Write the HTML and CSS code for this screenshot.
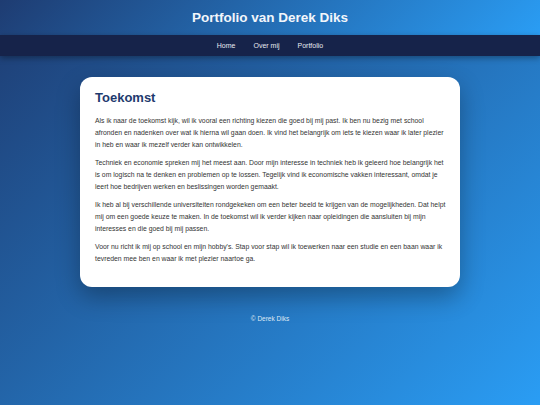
FILE: index.html
```html
<!DOCTYPE html>
<html lang="nl">
<head>
<meta charset="utf-8">
<title>Portfolio van Derek Diks</title>
<link rel="stylesheet" href="styles.css">
</head>
<body>
<header class="site-header">
  <h1 class="site-title">Portfolio van Derek Diks</h1>
</header>
<nav class="site-nav">
  <a href="#" class="nav-link">Home</a>
  <a href="#" class="nav-link">Over mij</a>
  <a href="#" class="nav-link">Portfolio</a>
</nav>
<main class="content">
  <section class="card">
    <h2 class="card-title">Toekomst</h2>
    <p>Als ik naar de toekomst kijk, wil ik vooral een richting kiezen die goed bij mij past. Ik ben nu bezig met school afronden en nadenken over wat ik hierna wil gaan doen. Ik vind het belangrijk om iets te kiezen waar ik later plezier in heb en waar ik mezelf verder kan ontwikkelen.</p>
    <p>Techniek en economie spreken mij het meest aan. Door mijn interesse in techniek heb ik geleerd hoe belangrijk het is om logisch na te denken en problemen op te lossen. Tegelijk vind ik economische vakken interessant, omdat je leert hoe bedrijven werken en beslissingen worden gemaakt.</p>
    <p>Ik heb al bij verschillende universiteiten rondgekeken om een beter beeld te krijgen van de mogelijkheden. Dat helpt mij om een goede keuze te maken. In de toekomst wil ik verder kijken naar opleidingen die aansluiten bij mijn interesses en die goed bij mij passen.</p>
    <p>Voor nu richt ik mij op school en mijn hobby's. Stap voor stap wil ik toewerken naar een studie en een baan waar ik tevreden mee ben en waar ik met plezier naartoe ga.</p>
  </section>
</main>
<footer class="site-footer">© Derek Diks</footer>
</body>
</html>
```
FILE: styles.css
```css
html, body {
  margin: 0;
  padding: 0;
}
body {
  min-height: 405px;
  font-family: "Liberation Sans", Arial, sans-serif;
  background: linear-gradient(135deg, #1e3c72 0%, #2a9df4 100%);
  color: #333;
}
.site-header {
  height: 35px;
  display: flex;
  align-items: center;
  justify-content: center;
  background: linear-gradient(135deg, #1e3c72 0%, #2a9df4 100%);
}
.site-title {
  margin: 0;
  font-size: 13.5px;
  font-weight: bold;
  color: #f2f6fb;
}
.site-nav {
  height: 21px;
  display: flex;
  align-items: center;
  justify-content: center;
  gap: 18px;
  background: #16234a;
  box-shadow: 0 2px 6px rgba(0, 0, 0, 0.35);
}
.nav-link {
  color: #e6e9f0;
  text-decoration: none;
  font-size: 7px;
}
.content {
  padding-top: 21px;
  display: flex;
  justify-content: center;
}
.card {
  width: 354px;
  background: #fff;
  border-radius: 12px;
  padding: 13px 11px 16px 15px;
  box-shadow: 0 10px 25px rgba(0, 0, 0, 0.3);
}
.card-title {
  margin: 0 0 10px;
  font-size: 13px;
  color: #1e3a6e;
}
.card p {
  margin: 0 0 6px;
  font-size: 6.85px;
  line-height: 12px;
}
.site-footer {
  text-align: center;
  color: #dfe8f5;
  font-size: 6.5px;
  padding-top: 28px;
}
```
